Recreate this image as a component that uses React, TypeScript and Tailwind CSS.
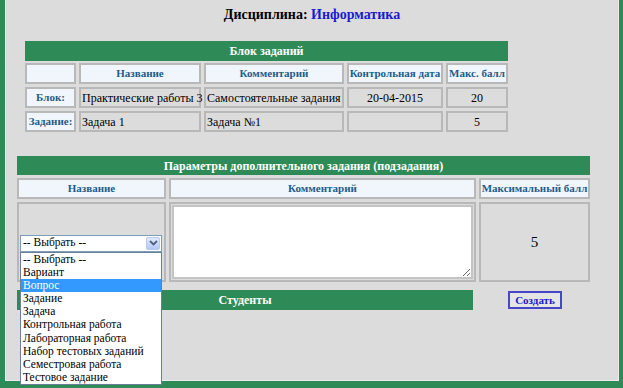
import type { ReactNode } from 'react'

const options = [
  '-- Выбрать --',
  'Вариант',
  'Вопрос',
  'Задание',
  'Задача',
  'Контрольная работа',
  'Лабораторная работа',
  'Набор тестовых заданий',
  'Семестровая работа',
  'Тестовое задание',
]

function HeadCell({ children }: { children?: ReactNode }) {
  return (
    <div className="flex h-[21px] items-center justify-center border-2 border-[#b8b8b8] bg-[#f0f6fb] text-[11px] font-bold text-[#1f5c8a] whitespace-nowrap">
      {children}
    </div>
  )
}

function Cell({ children, center }: { children?: ReactNode; center?: boolean }) {
  return (
    <div className={`flex h-[21px] items-center border-2 border-[#b8b8b8] bg-[#dcdcdc] text-[12px] text-black whitespace-nowrap ${center ? 'justify-center' : 'pl-[1px]'}`}>
      {children}
    </div>
  )
}

function GreenBar({ children, className }: { children: ReactNode; className?: string }) {
  return (
    <div className={`flex items-center justify-center bg-[#2e8b57] text-[12px] font-bold text-white ${className ?? ''}`}>
      {children}
    </div>
  )
}

export default function App() {
  return (
    <div className="w-[623px] h-[388px] overflow-hidden bg-[#2e8b57] pl-[5px] pr-[4px] pb-[7px] [font-family:'Liberation_Serif',serif]">
      <div className="relative h-full border-l border-r border-b border-[#ececec] bg-[#dcdcdc]">
        {/* Заголовок */}
        <div className="pt-[6px] h-[26px] text-center text-[14px] font-bold leading-[18px]">
          <span className="text-black">Дисциплина: </span>
          <span className="text-[#1a1ad2]">Информатика</span>
        </div>

        {/* Блок заданий */}
        <div className="mt-[15px] ml-[19px] grid grid-cols-[51px_122px_140px_96px_62px] gap-[3px]">
          <GreenBar className="col-span-5 h-[20px] -mb-[1px]">Блок заданий</GreenBar>
          <HeadCell />
          <HeadCell>Название</HeadCell>
          <HeadCell>Комментарий</HeadCell>
          <HeadCell>Контрольная дата</HeadCell>
          <HeadCell>Макс. балл</HeadCell>

          <HeadCell>Блок:</HeadCell>
          <Cell>Практические работы 3</Cell>
          <Cell>Самостоятельные задания</Cell>
          <Cell center>20-04-2015</Cell>
          <Cell center>20</Cell>

          <HeadCell>Задание:</HeadCell>
          <Cell>Задача 1</Cell>
          <Cell>Задача №1</Cell>
          <Cell />
          <Cell center>5</Cell>
        </div>

        {/* Параметры подзадания */}
        <div className="mt-[24px] ml-[11px] grid grid-cols-[149px_307px_111px] gap-[3px]">
          <GreenBar className="col-span-3 h-[19px]">Параметры дополнительного задания (подзадания)</GreenBar>
          <HeadCell>Название</HeadCell>
          <HeadCell>Комментарий</HeadCell>
          <HeadCell>Максимальный балл</HeadCell>

          <div className="h-[80px] flex items-center border-2 border-[#b8b8b8] bg-[#dcdcdc]">
            <div className="relative ml-[1px] mt-[2px] w-[142px]">
              <div className="flex h-[17px] items-center justify-between border border-[#7f9db9] bg-white pl-[2px] pr-[1px] text-[11.5px]">
                <span>-- Выбрать --</span>
                <span className="flex h-[13px] w-[14px] items-center justify-center rounded-[2px] border border-[#b7c9ec] bg-gradient-to-b from-[#e1eafe] to-[#b3c8f5]">
                  <svg width="9" height="6" viewBox="0 0 9 6">
                    <path d="M1 1 L4.5 4.5 L8 1" fill="none" stroke="#4d6185" strokeWidth="1.8" />
                  </svg>
                </span>
              </div>
              <div className="absolute left-0 top-full z-10 w-[142px] border border-[#6d7f96] bg-white text-[11.5px] leading-[13.2px]">
                {options.map(o => (
                  <div
                    key={o}
                    className={`h-[13.2px] pl-[2px] whitespace-nowrap ${o === 'Вопрос' ? 'bg-[#3399ff] text-white' : 'text-black'}`}
                  >
                    {o}
                  </div>
                ))}
              </div>
            </div>
          </div>
          <div className="h-[80px] border-2 border-[#b8b8b8] bg-[#dcdcdc] p-px">
            <textarea
              readOnly
              className="block h-full w-full border-2 border-[#c4c4c4] bg-white outline-none"
            />
          </div>
          <div className="h-[80px] flex items-center justify-center border-2 border-[#b8b8b8] bg-[#dcdcdc] text-[15px]">
            5
          </div>
        </div>

        {/* Студенты */}
        <div className="mt-[8px] ml-[11px] flex items-center">
          <GreenBar className="h-[20px] w-[456px]">Студенты</GreenBar>
          <div className="ml-[35px] flex h-[18px] w-[54px] items-center justify-center border-2 border-[#4646c8] bg-[#e4e4e4] text-[11px] font-bold text-[#1a1ad2]">
            Создать
          </div>
        </div>
      </div>
    </div>
  )
}
